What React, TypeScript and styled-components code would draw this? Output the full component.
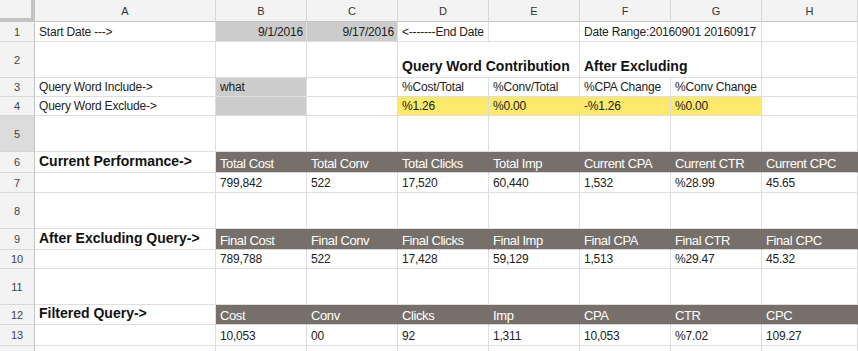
import styled, { createGlobalStyle, css } from 'styled-components';

const GlobalStyle = createGlobalStyle`
  html, body {
    margin: 0;
    padding: 0;
    background: #ffffff;
  }
  body {
    font-family: 'Liberation Sans', Arial, sans-serif;
    overflow: hidden;
  }
`;

const COLS = [35, 181, 91, 91, 91, 91, 91, 91, 96];
const ROW_HEIGHTS = [22, 20, 36, 19, 19, 36, 21, 20, 36, 21, 19, 36, 20, 21, 10];
const LETTERS = ['A', 'B', 'C', 'D', 'E', 'F', 'G', 'H'];

const Sheet = styled.div`
  display: grid;
  grid-template-columns: ${COLS.map((c) => `${c}px`).join(' ')};
  grid-template-rows: ${ROW_HEIGHTS.map((r) => `${r}px`).join(' ')};
  width: 858px;
  height: 351px;
  overflow: hidden;
`;

const Corner = styled.div`
  background: #f3f3f3;
  border-right: 4px solid #c4c4c4;
  border-bottom: 4px solid #c4c4c4;
  box-sizing: border-box;
`;

const ColHead = styled.div`
  display: flex;
  align-items: center;
  justify-content: center;
  background: #f3f3f3;
  border-right: 1px solid #d6d6d6;
  border-bottom: 1px solid #c4c4c4;
  box-sizing: border-box;
  font-size: 11px;
  color: #333333;
`;

const RowHead = styled.div<{ $selected?: boolean }>`
  display: flex;
  align-items: center;
  justify-content: center;
  background: ${(p) => (p.$selected ? '#dcdcdc' : '#f3f3f3')};
  border-right: 1px solid #c4c4c4;
  border-bottom: 1px solid #d6d6d6;
  box-sizing: border-box;
  font-size: 11px;
  color: #444444;
`;

type Tone = 'plain' | 'input' | 'yellow' | 'dark';

const toneBg: Record<Tone, string> = {
  plain: '#ffffff',
  input: '#cccccc',
  yellow: '#fde96c',
  dark: '#776f6a',
};

const Cell = styled.div<{ $tone: Tone; $span: number; $right?: boolean; $bold?: boolean }>`
  grid-column: span ${(p) => p.$span};
  display: flex;
  align-items: flex-end;
  justify-content: ${(p) => (p.$right ? 'flex-end' : 'flex-start')};
  padding: 0 3px 2px 4px;
  box-sizing: border-box;
  background: ${(p) => toneBg[p.$tone]};
  border-right: 1px solid #dedede;
  border-bottom: 1px solid #dedede;
  white-space: nowrap;
  overflow: hidden;
  font-size: 12px;
  letter-spacing: -0.2px;
  color: #222222;
  ${(p) =>
    p.$tone === 'dark' &&
    css`
      color: #ffffff;
      font-size: 13px;
      letter-spacing: -0.4px;
      padding-bottom: 1px;
      border-right-color: #776f6a;
      border-bottom-color: #d8d8d8;
    `}
  ${(p) =>
    p.$bold &&
    css`
      font-weight: bold;
      font-size: 14px;
      letter-spacing: 0;
      color: #111111;
      padding-bottom: 3px;
    `}
`;

type CellDef = { t?: string; tone?: Tone; span?: number; right?: boolean; bold?: boolean };

const blank = (n: number): CellDef[] => Array.from({ length: n }, () => ({}));
const darkRow = (labels: string[]): CellDef[] => labels.map((t) => ({ t, tone: 'dark' as Tone }));
const valueRow = (vals: string[]): CellDef[] => vals.map((t) => ({ t }));

const ROWS: CellDef[][] = [
  [
    { t: 'Start Date --->' },
    { t: '9/1/2016', tone: 'input', right: true },
    { t: '9/17/2016', tone: 'input', right: true },
    { t: '<-------End Date' },
    {},
    { t: 'Date Range:20160901 20160917', span: 2 },
    {},
  ],
  [
    ...blank(3),
    { t: 'Query Word Contribution', span: 2, bold: true },
    { t: 'After Excluding', span: 2, bold: true },
    {},
  ],
  [
    { t: 'Query Word Include->' },
    { t: 'what', tone: 'input' },
    {},
    { t: '%Cost/Total' },
    { t: '%Conv/Total' },
    { t: '%CPA Change' },
    { t: '%Conv Change' },
    {},
  ],
  [
    { t: 'Query Word Exclude->' },
    { tone: 'input' },
    {},
    { t: '%1.26', tone: 'yellow' },
    { t: '%0.00', tone: 'yellow' },
    { t: '-%1.26', tone: 'yellow' },
    { t: '%0.00', tone: 'yellow' },
    {},
  ],
  blank(8),
  [
    { t: 'Current Performance->', bold: true },
    ...darkRow(['Total Cost', 'Total Conv', 'Total Clicks', 'Total Imp', 'Current CPA', 'Current CTR', 'Current CPC']),
  ],
  [{}, ...valueRow(['799,842', '522', '17,520', '60,440', '1,532', '%28.99', '45.65'])],
  blank(8),
  [
    { t: 'After Excluding Query->', bold: true },
    ...darkRow(['Final Cost', 'Final Conv', 'Final Clicks', 'Final Imp', 'Final CPA', 'Final CTR', 'Final CPC']),
  ],
  [{}, ...valueRow(['789,788', '522', '17,428', '59,129', '1,513', '%29.47', '45.32'])],
  blank(8),
  [
    { t: 'Filtered Query->', bold: true },
    ...darkRow(['Cost', 'Conv', 'Clicks', 'Imp', 'CPA', 'CTR', 'CPC']),
  ],
  [{}, ...valueRow(['10,053', '00', '92', '1,311', '10,053', '%7.02', '109.27'])],
  blank(8),
];

export default function App() {
  return (
    <>
      <GlobalStyle />
      <Sheet>
        <Corner />
        {LETTERS.map((l) => (
          <ColHead key={l}>{l}</ColHead>
        ))}
        {ROWS.map((row, ri) => [
          <RowHead key={`h${ri}`} $selected={ri === 4}>
            {ri < 13 ? ri + 1 : ''}
          </RowHead>,
          ...row.map((c, ci) => (
            <Cell
              key={`c${ri}-${ci}`}
              $tone={c.tone ?? 'plain'}
              $span={c.span ?? 1}
              $right={c.right}
              $bold={c.bold}
            >
              {c.t}
            </Cell>
          )),
        ])}
      </Sheet>
    </>
  );
}
